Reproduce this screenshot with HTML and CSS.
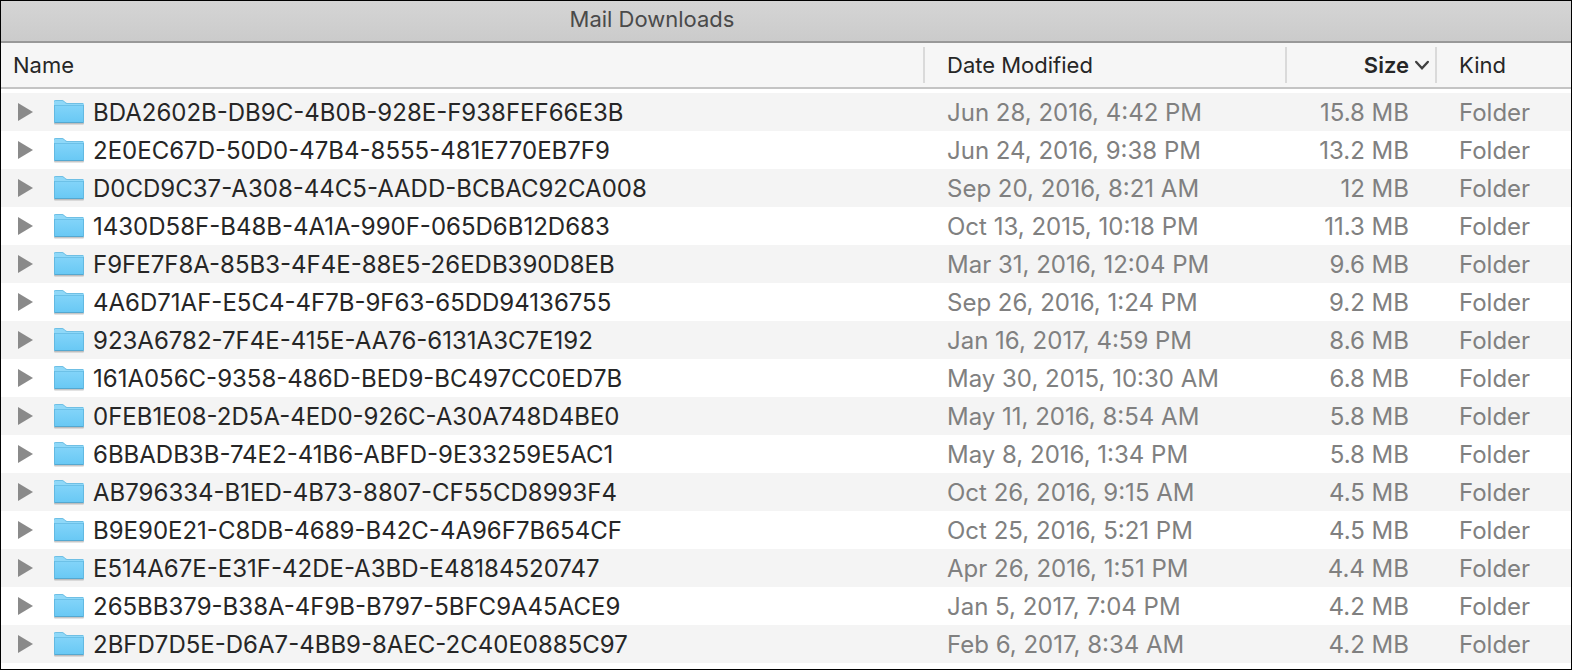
FILE: index.html
```
<!DOCTYPE html>
<html lang="en">
<head>
<meta charset="utf-8">
<title>Mail Downloads</title>
<link rel="stylesheet" href="styles.css">
</head>
<body>
<svg class="defs" aria-hidden="true">
  <defs>
    <linearGradient id="folder-front" x1="0" y1="0" x2="0" y2="1">
      <stop offset="0" stop-color="#83d4f9"/>
      <stop offset="1" stop-color="#68c8f4"/>
    </linearGradient>
    <symbol id="folder" viewBox="0 0 32 26">
      <path d="M2 24.5h28" stroke="#000" stroke-opacity=".22" stroke-width="2" stroke-linecap="round"/>
      <path d="M1 2.200Q1 1 2.200 1H9Q10 1 10.800 1.800L12.200 3.200Q13 4 14 4H29.800Q31 4 31 5.200V9H1Z" fill="#8fd8f8"/>
      <path d="M1.500 2.500Q1.500 1.500 2.500 1.500H9Q10 1.500 10.500 2L12 3.500Q13 4.500 14 4.500H30" fill="none" stroke="#6fbfe4"/>
      <path d="M1 6H31V23Q31 24 30 24H2Q1 24 1 23Z" fill="url(#folder-front)"/>
      <path d="M1 6.500H31" stroke="#6cc1e8"/>
      <path d="M1.500 6V23M30.500 6V23" stroke="#62b9e2"/>
      <path d="M1.500 23.500H30.500" stroke="#55a8d0"/>
    </symbol>
    <symbol id="triangle" viewBox="0 0 16 18">
      <path d="M0 0 15 9 0 18Z" fill="#8a8a8a"/>
    </symbol>
  </defs>
</svg>
<main class="window">
  <header class="titlebar"><h1 class="title">Mail Downloads</h1></header>
  <table class="files">
    <colgroup><col><col class="col-date"><col class="col-size"><col class="col-kind"></colgroup>
    <thead>
      <tr>
        <th scope="col"><button class="head head-name" type="button">Name</button></th>
        <th scope="col"><button class="head" type="button">Date Modified</button></th>
        <th scope="col" aria-sort="descending"><button class="head head-size" type="button">Size<svg class="chevron" viewBox="0 0 14 10" aria-hidden="true"><path d="M1.200 2 7 8.200 12.800 2"/></svg></button></th>
        <th scope="col"><button class="head" type="button">Kind</button></th>
      </tr>
    </thead>
    <tbody id="rows"></tbody>
  </table>
</main>
<script src="files.js"></script>
</body>
</html>
```
FILE: styles.css
```
* {
  box-sizing: border-box;
}

body {
  margin: 0;
  background: #fff;
  color: #262626;
  font-family: Inter, "Liberation Sans", sans-serif;
}

button {
  border: 0;
  padding: 0;
  background: none;
  color: inherit;
  font: inherit;
}

.defs {
  position: absolute;
  width: 0;
  height: 0;
}

.window {
  min-height: 100vh;
  border: 1px solid #000;
}

.titlebar {
  height: 42px;
  padding-right: 268px;
  border-bottom: 2px solid #999;
  background: linear-gradient(#d5d5d5, #cbcbcb);
}

.title {
  margin: 0;
  color: #4a4a4a;
  font-size: 22px;
  font-weight: 400;
  line-height: 37px;
  text-align: center;
}

.files {
  width: 100%;
  border-spacing: 0;
  table-layout: fixed;
}

.col-date {
  width: 362px;
}

.col-size {
  width: 150px;
}

.col-kind {
  width: 136px;
}

.files th {
  height: 46px;
  padding: 0;
  border-bottom: 2px solid #c4c4c4;
  background: #f6f6f6;
  font-size: 22px;
  font-weight: 400;
  text-align: left;
}

.head {
  display: flex;
  align-items: center;
  width: 100%;
  height: 36px;
  padding-left: 22px;
  border-left: 2px solid #dadada;
}

.head-name {
  padding-left: 12px;
  border-left: 0;
}

.head-size {
  justify-content: flex-end;
  gap: 6px;
  padding-right: 6px;
  font-weight: 600;
}

.chevron {
  width: 14px;
  height: 10px;
  overflow: visible;
  fill: none;
  stroke: #404040;
  stroke-width: 2.4;
  stroke-linecap: round;
}

.files tbody::before {
  content: "";
  display: table-row;
  height: 4px;
}

.files td {
  height: 38px;
  padding: 2px 0 0 24px;
  color: #808080;
  font-size: 24px;
  line-height: 36px;
  white-space: nowrap;
}

.files tbody tr:nth-child(odd) {
  background: #f4f4f4;
}

.files .size {
  padding: 2px 26px 0 0;
  text-align: right;
}

.files .name {
  padding: 0 0 0 17px;
  color: #262626;
}

.entry {
  display: flex;
  align-items: center;
}

.label {
  padding-top: 2px;
}

.toggle {
  display: flex;
  margin-right: 19px;
}

.triangle {
  width: 16px;
  height: 18px;
}

.folder {
  width: 32px;
  height: 26px;
  margin-right: 8px;
}
```
FILE: files.js
```
const files = [
  ["BDA2602B-DB9C-4B0B-928E-F938FEF66E3B", "Jun 28, 2016, 4:42 PM", "15.8 MB"],
  ["2E0EC67D-50D0-47B4-8555-481E770EB7F9", "Jun 24, 2016, 9:38 PM", "13.2 MB"],
  ["D0CD9C37-A308-44C5-AADD-BCBAC92CA008", "Sep 20, 2016, 8:21 AM", "12 MB"],
  ["1430D58F-B48B-4A1A-990F-065D6B12D683", "Oct 13, 2015, 10:18 PM", "11.3 MB"],
  ["F9FE7F8A-85B3-4F4E-88E5-26EDB390D8EB", "Mar 31, 2016, 12:04 PM", "9.6 MB"],
  ["4A6D71AF-E5C4-4F7B-9F63-65DD94136755", "Sep 26, 2016, 1:24 PM", "9.2 MB"],
  ["923A6782-7F4E-415E-AA76-6131A3C7E192", "Jan 16, 2017, 4:59 PM", "8.6 MB"],
  ["161A056C-9358-486D-BED9-BC497CC0ED7B", "May 30, 2015, 10:30 AM", "6.8 MB"],
  ["0FEB1E08-2D5A-4ED0-926C-A30A748D4BE0", "May 11, 2016, 8:54 AM", "5.8 MB"],
  ["6BBADB3B-74E2-41B6-ABFD-9E33259E5AC1", "May 8, 2016, 1:34 PM", "5.8 MB"],
  ["AB796334-B1ED-4B73-8807-CF55CD8993F4", "Oct 26, 2016, 9:15 AM", "4.5 MB"],
  ["B9E90E21-C8DB-4689-B42C-4A96F7B654CF", "Oct 25, 2016, 5:21 PM", "4.5 MB"],
  ["E514A67E-E31F-42DE-A3BD-E48184520747", "Apr 26, 2016, 1:51 PM", "4.4 MB"],
  ["265BB379-B38A-4F9B-B797-5BFC9A45ACE9", "Jan 5, 2017, 7:04 PM", "4.2 MB"],
  ["2BFD7D5E-D6A7-4BB9-8AEC-2C40E0885C97", "Feb 6, 2017, 8:34 AM", "4.2 MB"]
];

document.getElementById("rows").innerHTML = files.map(([name, date, size]) => `
  <tr>
    <td class="name"><div class="entry">
      <button class="toggle" type="button" aria-label="Expand ${name}"><svg class="triangle" aria-hidden="true"><use href="#triangle"/></svg></button>
      <svg class="folder" aria-hidden="true"><use href="#folder"/></svg>
      <span class="label">${name}</span>
    </div></td>
    <td>${date}</td>
    <td class="size">${size}</td>
    <td>Folder</td>
  </tr>`).join("");
```
